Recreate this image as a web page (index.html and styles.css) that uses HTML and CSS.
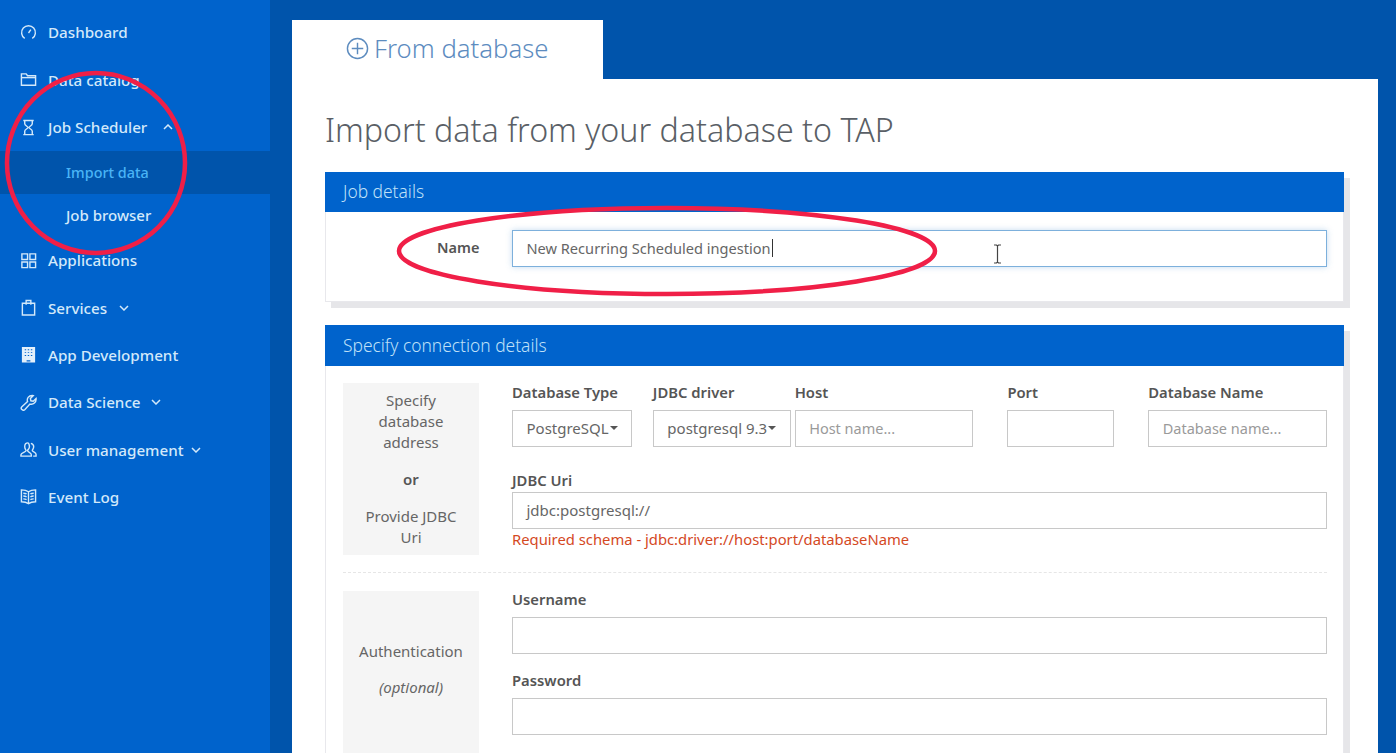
FILE: index.html
```html
<!DOCTYPE html>
<html lang="en">
<head>
<meta charset="utf-8">
<title>Import data</title>
<link rel="stylesheet" href="styles.css">
</head>
<body>
<div class="app">
  <nav class="sidebar">
    <a class="nav-item"><svg class="ico" viewBox="0 0 18 18"><path d="M5 15.2A7.300 7.300 0 1 1 13 15.2"/><path d="M9 9.500l2.500-3.500"/></svg><span>Dashboard</span></a>
    <a class="nav-item"><svg class="ico" viewBox="0 0 18 18"><path d="M1.500 15V3h5l1.500 2h8.500v10z"/><path d="M1.500 7h15"/></svg><span>Data catalog</span></a>
    <a class="nav-item"><svg class="ico" viewBox="0 0 18 18"><path d="M3.500 1.500h11M3.500 16.500h11M5 1.500v3.500c0 2 3.500 3 3.500 4s-3.500 2-3.500 4v3.500M13 1.500v3.500c0 2-3.500 3-3.500 4s3.500 2 3.500 4v3.500"/></svg><span>Job Scheduler</span><svg class="chev chev-job" viewBox="0 0 10 6"><path d="M1 5l4-4 4 4"/></svg></a>
    <a class="nav-sub active">Import data</a>
    <a class="nav-sub">Job browser</a>
    <a class="nav-item"><svg class="ico" viewBox="0 0 18 18"><path d="M2 2h6v6H2zM10.500 2h6v6h-6zM2 10.500h6v6H2zM10.500 10.500h6v6h-6z"/></svg><span>Applications</span></a>
    <a class="nav-item"><svg class="ico" viewBox="0 0 18 18"><path d="M2.500 4.500h13v12.500h-13z"/><path d="M6.500 6V1.500h5V6"/></svg><span>Services</span><svg class="chev chev-services" viewBox="0 0 10 6"><path d="M1 1l4 4 4-4"/></svg></a>
    <a class="nav-item"><svg class="ico ico-fill" viewBox="0 0 18 18"><path d="M2 1h14v16.500H2zM5 3.500v1h1.500v-1zM8.200 3.500v1h1.500v-1zM11.500 3.500v1H13v-1zM5 6.500v1h1.500v-1zM8.200 6.500v1h1.500v-1zM11.500 6.500v1H13v-1zM5 9.500v1h1.500v-1zM8.200 9.500v1h1.500v-1zM11.500 9.500v1H13v-1zM7 15v1.500h4V15z" fill-rule="evenodd"/></svg><span>App Development</span></a>
    <a class="nav-item"><svg class="ico" viewBox="0 0 18 18"><path d="M2 16.500c-1-1-1-2 0-3l6-5.500c-1-3 1-6.500 5-6.500l1 .2-3 3 .5 2.500 2.500.5 3-3c.500 4-3 7-6.500 6l-5.500 6c-1 .8-2 .8-3-.2z"/></svg><span>Data Science</span><svg class="chev" viewBox="0 0 10 6"><path d="M1 1l4 4 4-4"/></svg></a>
    <a class="nav-item"><svg class="ico" viewBox="0 0 18 18"><path d="M8.500 2C6 2 5 4 5 6s1 3 1.500 4c0 2-5.500 2-5.500 4.500V16h11v-1.500c0-2.500-4-2.500-4-4.500.5-1 2-2 2-4s-1-4-1.500-4z"/><path d="M11.500 2.500c2 .5 3 2 3 3.500s-1 3-1.500 4c0 1.500 4 1.500 4 4V16h-3"/></svg><span>User management</span><svg class="chev chev-user" viewBox="0 0 10 6"><path d="M1 1l4 4 4-4"/></svg></a>
    <a class="nav-item"><svg class="ico" viewBox="0 0 18 18"><path d="M9 4C7 2.500 4 2 1.500 2v12.500c2.500 0 5.500.5 7.500 2 2-1.500 5-2 7.500-2V2C14 2 11 2.500 9 4zM9 4v12.500M3.500 5.500c1.300 0 2.500.2 3.500.8M3.500 8.500c1.300 0 2.500.2 3.500.8M3.500 11.500c1.300 0 2.500.2 3.500.8M14.500 5.500c-1.300 0-2.500.2-3.500.8M14.500 8.500c-1.300 0-2.500.2-3.500.8M14.500 11.500c-1.300 0-2.500.2-3.500.8"/></svg><span>Event Log</span></a>
  </nav>

  <main class="main">
    <div class="tab">
      <svg class="tab-ico" viewBox="0 0 24 24"><circle cx="12" cy="12" r="10.500"/><path d="M12 6v12M6 12h12"/></svg>
      <span>From database</span>
    </div>
    <div class="panel">
      <h1 class="title">Import data from your database to TAP</h1>

      <section class="card card-job">
        <header class="card-head">Job details</header>
        <div class="card-body name-row">
          <label class="name-label">Name</label>
          <div class="input input-focus">New Recurring Scheduled ingestion<span class="caret"></span></div>
        </div>
      </section>

      <section class="card card-conn">
        <header class="card-head card-head-tall">Specify connection details</header>
        <div class="card-body conn-body">
          <div class="group">
            <div class="hint hint-addr">
              <p>Specify database address</p>
              <p class="hint-or">or</p>
              <p>Provide JDBC Uri</p>
            </div>
            <div class="fields">
              <div class="field-row">
                <div class="field f-type"><label>Database Type</label><div class="input select">PostgreSQL<i class="arrow"></i></div></div>
                <div class="field f-driver"><label>JDBC driver</label><div class="input select">postgresql 9.3<i class="arrow"></i></div></div>
                <div class="field f-host"><label>Host</label><div class="input ph">Host name...</div></div>
                <div class="field f-port"><label>Port</label><div class="input"></div></div>
                <div class="field f-db"><label>Database Name</label><div class="input ph">Database name...</div></div>
              </div>
              <div class="field f-uri"><label>JDBC Uri</label><div class="input">jdbc:postgresql://</div></div>
              <div class="error">Required schema - jdbc:driver://host:port/databaseName</div>
            </div>
          </div>
          <div class="group group-auth">
            <div class="hint hint-auth">
              <p>Authentication</p>
              <p class="hint-opt">(optional)</p>
            </div>
            <div class="fields">
              <div class="field f-user"><label>Username</label><div class="input"></div></div>
              <div class="field f-pass"><label>Password</label><div class="input"></div></div>
            </div>
          </div>
        </div>
      </section>
    </div>
  </main>
</div>

<svg class="overlay" viewBox="0 0 1396 753">
  <ellipse cx="96" cy="163" rx="89" ry="90"/>
  <ellipse cx="667" cy="251" rx="268" ry="43"/>
</svg>
<svg class="ibeam" viewBox="0 0 9 20"><path d="M1 1h2.500l1 1 1-1H8M4.500 2v16M1 19h2.500l1-1 1 1H8"/></svg>
</body>
</html>
```
FILE: styles.css
```css
* { box-sizing: border-box; }
html, body { margin: 0; height: 753px; overflow: hidden; }
body {
  font-family: "Noto Sans", "Open Sans", "Liberation Sans", sans-serif;
  color: #555;
  background: #0054ab;
}
p { margin: 0; }

.app { display: flex; height: 753px; }

/* Sidebar */
.sidebar {
  width: 270px;
  flex: none;
  background: #0063cc;
  padding-top: 8.8px;
  color: #d3e9fa;
  font-size: 15.2px;
  font-weight: 500;
}
.nav-item {
  display: flex;
  align-items: center;
  height: 47.3px;
  padding-left: 20px;
}
.nav-sub {
  display: flex;
  align-items: center;
  height: 43px;
  padding-left: 66px;
  font-size: 15px;
}
.nav-sub.active { background: #0054ab; color: #4ab4f6; font-size: 14.4px; }
.ico {
  width: 17px;
  height: 17px;
  margin-right: 11px;
  flex: none;
  fill: none;
  stroke: #d3e9fa;
  stroke-width: 1.5;
}
.ico-fill { fill: #e3f0fb; stroke: none; }
.chev {
  width: 10px;
  height: 6px;
  margin-left: 10px;
  fill: none;
  stroke: #d3e9fa;
  stroke-width: 1.5;
}
.chev-job { margin-left: 16px; }
.chev-services { margin-left: 12px; }
.chev-user { margin-left: 7px; }

/* Main */
.main {
  flex: 1;
  padding: 20px 18px 0 22px;
  min-width: 0;
}
.tab {
  width: 311px;
  height: 59px;
  background: #fff;
  display: flex;
  align-items: center;
  padding: 0 0 2px 54px;
  gap: 5px;
  color: #5d8cbf;
  font-size: 25.7px;
  font-weight: 300;
}
.tab-ico {
  width: 23px;
  height: 23px;
  fill: none;
  stroke: #5d8cbf;
  stroke-width: 1.5;
}
.panel {
  background: #fff;
  height: 680px;
  padding: 29px 34px 0 33px;
}
.title {
  margin: 0;
  font-size: 32.2px;
  line-height: 44px;
  font-weight: 300;
  color: #5a5f66;
}

/* Cards */
.card {
  width: 1019px;
  background: #fff;
  border: 1px solid #e8e8ec;
  border-top: 0;
  box-shadow: 6px 6px 0 #e6e6e9;
}
.card-job { margin-top: 20px; }
.card-conn { margin-top: 23px; }
.card-head {
  height: 40px;
  background: #0063cc;
  color: #bfe0f8;
  font-size: 17.4px;
  font-weight: 300;
  padding: 0 18px 2px;
  margin: 0 -1px;
  display: flex;
  align-items: center;
}
.card-head-tall { height: 41px; }
.name-row {
  height: 89px;
  padding: 18px 16px 0 111px;
  display: flex;
  align-items: flex-start;
}
.name-label {
  width: 75px;
  font-size: 14.5px;
  font-weight: 600;
  color: #555;
  line-height: 34px;
}
.input {
  flex: 1;
  display: flex;
  align-items: center;
  height: 37px;
  border: 1px solid #c8c8c8;
  padding: 0 13.5px 2px;
  font-size: 15px;
  color: #666;
  background: #fff;
  white-space: nowrap;
}
.input-focus {
  border-color: #7db0dc;
  box-shadow: 0 0 6px rgba(125, 176, 220, .45);
  font-size: 14.6px;
}
.caret { width: 1px; height: 18px; background: #333; margin-left: 1px; }
.ph { color: #9a9a9a; font-size: 14.5px; }

/* Connection form */
.conn-body { padding: 17px 16px 0 17px; }
.group { display: flex; gap: 33px; }
.group-auth {
  border-top: 1px dashed #e6e6e6;
  margin-top: 17px;
  padding-top: 18px;
}
.hint {
  width: 136px;
  flex: none;
  background: #f5f5f5;
  text-align: center;
  font-size: 15px;
  line-height: 21px;
  color: #666;
  padding: 7px 16px 8px;
}
.hint-addr { height: 172px; }
.hint-or { margin: 16px 0; font-weight: 600; color: #555; }
.hint-auth {
  height: 170px;
  padding-top: 50px;
}
.hint-opt { margin-top: 15px; font-style: italic; }
.fields { flex: 1; min-width: 0; }
.field-row { display: flex; }
.field { display: flex; flex-direction: column; }
.field label {
  font-size: 14.8px;
  font-weight: 600;
  color: #555;
  line-height: 18px;
  margin-bottom: 9px;
  white-space: nowrap;
}
.field .input { flex: none; }
.f-type { width: 120px; }
.f-driver { width: 138px; margin-left: 21px; }
.f-host { width: 179px; margin-left: 4px; }
.f-port { width: 107px; margin-left: 34px; }
.f-db { width: 179px; margin-left: 34px; }
.f-uri { margin-top: 24px; }
.f-uri label { margin-bottom: 3px; }
.f-user label { line-height: 16px; margin-bottom: 10px; }
.f-pass { margin-top: 17px; }
.select { padding-right: 0; }
.arrow {
  width: 0;
  height: 0;
  border: 4px solid transparent;
  border-top-color: #555;
  border-bottom: 0;
  margin-left: 1px;
}
.error {
  font-size: 14.8px;
  line-height: 20px;
  color: #d4491f;
}

/* Annotations drawn over the page */
.overlay {
  position: absolute;
  left: 0;
  top: 0;
  width: 1396px;
  height: 753px;
  fill: none;
  stroke: #f01f47;
  stroke-width: 4.5;
  pointer-events: none;
}
.ibeam {
  position: absolute;
  left: 993px;
  top: 244px;
  width: 9px;
  height: 20px;
  fill: none;
  stroke: #444;
  stroke-width: 1.2;
}
```
